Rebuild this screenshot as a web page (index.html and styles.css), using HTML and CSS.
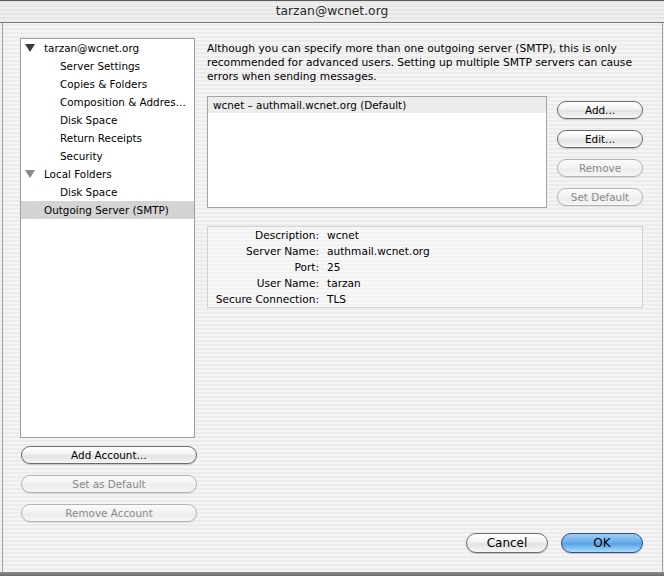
FILE: index.html
```html
<!DOCTYPE html>
<html>
<head>
  <meta charset="utf-8">
  <title>Account Settings</title>
  <link rel="stylesheet" href="styles.css">
</head>
<body>
  <div class="window">
    <div class="titlebar">tarzan@wcnet.org</div>

    <div class="frame">
      <div class="main">

        <div class="sidebar">
          <ul class="tree">
            <li class="row top">
              <svg class="twisty" width="10" height="8" viewBox="0 0 10 8"><polygon points="0,0 10,0 5,8" fill="#3a3a3a"/></svg>
              tarzan@wcnet.org
            </li>
            <li class="row sub">Server Settings</li>
            <li class="row sub">Copies &amp; Folders</li>
            <li class="row sub">Composition &amp; Addres&hellip;</li>
            <li class="row sub">Disk Space</li>
            <li class="row sub">Return Receipts</li>
            <li class="row sub">Security</li>
            <li class="row top">
              <svg class="twisty" width="10" height="8" viewBox="0 0 10 8"><polygon points="0,0 10,0 5,8" fill="#8a8a8a"/></svg>
              Local Folders
            </li>
            <li class="row sub">Disk Space</li>
            <li class="row top plain selected">Outgoing Server (SMTP)</li>
          </ul>

          <div class="side-buttons">
            <button class="btn">Add Account&hellip;</button>
            <button class="btn" disabled>Set as Default</button>
            <button class="btn" disabled>Remove Account</button>
          </div>
        </div>

        <div class="panel">
          <p class="note">Although you can specify more than one outgoing server (SMTP), this is only
            recommended for advanced users. Setting up multiple SMTP servers can cause
            errors when sending messages.</p>

          <div class="servers">
            <div class="server-list">
              <div class="server-row selected">wcnet &ndash; authmail.wcnet.org (Default)</div>
            </div>
            <div class="server-buttons">
              <button class="btn">Add...</button>
              <button class="btn">Edit...</button>
              <button class="btn" disabled>Remove</button>
              <button class="btn" disabled>Set Default</button>
            </div>
          </div>

          <table class="details">
            <tbody>
              <tr><td class="label">Description:</td><td class="value">wcnet</td></tr>
              <tr><td class="label">Server Name:</td><td class="value">authmail.wcnet.org</td></tr>
              <tr><td class="label">Port:</td><td class="value">25</td></tr>
              <tr><td class="label">User Name:</td><td class="value">tarzan</td></tr>
              <tr><td class="label">Secure Connection:</td><td class="value">TLS</td></tr>
            </tbody>
          </table>
        </div>

      </div>

      <div class="dialog-buttons">
        <button class="btn big">Cancel</button>
        <button class="btn big default">OK</button>
      </div>
    </div>

    <div class="shadow"></div>
  </div>
</body>
</html>
```

FILE: styles.css
```css
html,
body {
  margin: 0;
  padding: 0;
}

body {
  width: 664px;
  height: 576px;
  overflow: hidden;
  font-family: "DejaVu Sans", sans-serif;
  font-size: 10.4px;
  color: #000;
}

.window {
  display: flex;
  flex-direction: column;
  height: 576px;
  background: repeating-linear-gradient(#ececec 0px, #ececec 2px, #f4f4f4 2px, #f4f4f4 4px);
}

.titlebar {
  height: 23px;
  box-sizing: border-box;
  line-height: 21px;
  text-align: center;
  font-size: 12.3px;
  color: #2a2a2a;
  border-top: 1px solid #5a5a5a;
  border-bottom: 1px solid #7a7a7a;
  background: repeating-linear-gradient(#e6e6e6 0px, #e6e6e6 2px, #efefef 2px, #efefef 4px);
}

.frame {
  flex: 1;
  display: flex;
  flex-direction: column;
  margin: 0 1px 0 2px;
  border-left: 1px solid #a0a0a0;
  border-right: 1px solid #a0a0a0;
}

.main {
  flex: 1;
  display: flex;
  gap: 9px;
  padding: 15px 0 0 17px;
}

/* left column */

.sidebar {
  width: 178px;
}

.tree {
  list-style: none;
  margin: 0;
  padding: 0;
  width: 175px;
  height: 400px;
  box-sizing: border-box;
  border: 1px solid #9c9c9c;
  background: #fff;
}

.row {
  height: 18px;
  line-height: 18px;
  white-space: nowrap;
  position: relative;
}

.row.top {
  padding-left: 23px;
}

.row.sub {
  padding-left: 39px;
}

.row.selected {
  background: #d4d4d4;
}

.twisty {
  position: absolute;
  left: 4px;
  top: 5px;
}

.side-buttons {
  display: flex;
  flex-direction: column;
  gap: 11px;
  margin-top: 8px;
  padding-left: 1px;
}

.side-buttons .btn {
  width: 176px;
}

/* aqua buttons */

.btn {
  height: 18px;
  padding: 0;
  font-family: inherit;
  font-size: 10.4px;
  color: #000;
  border: 1px solid #6c6c6c;
  border-radius: 9px;
  background: linear-gradient(#ffffff 0%, #f2f2f2 45%, #e2e2e2 55%, #f6f6f6 100%);
  box-shadow: 0 1px 1px rgba(0, 0, 0, 0.18);
}

.btn:disabled {
  color: #8a8a8a;
  border-color: #b4b4b4;
  background: linear-gradient(#fbfbfb 0%, #f2f2f2 50%, #ececec 55%, #f6f6f6 100%);
  box-shadow: 0 1px 1px rgba(0, 0, 0, 0.08);
}

.btn.big {
  height: 20px;
  font-size: 12px;
  border-radius: 10px;
}

.btn.default {
  border-color: #2f4d8c;
  background: linear-gradient(#9fcdf4 0%, #6aaeea 45%, #5aa2e6 55%, #a7ddfb 100%);
}

/* right column */

.panel {
  width: 436px;
}

.note {
  margin: 4px 0 0;
  font-size: 10.7px;
  line-height: 14px;
}

.servers {
  display: flex;
  gap: 10px;
  margin-top: 12px;
}

.server-list {
  width: 340px;
  height: 112px;
  box-sizing: border-box;
  border: 1px solid #a4a4a4;
  background: #fff;
}

.server-row {
  height: 16px;
  line-height: 16px;
  padding-left: 5px;
}

.server-row.selected {
  background: #ececec;
}

.server-buttons {
  display: flex;
  flex-direction: column;
  gap: 11px;
  padding-top: 5px;
}

.server-buttons .btn {
  width: 86px;
}

.details {
  width: 436px;
  margin-top: 18px;
  border-collapse: collapse;
  border: 1px solid #d2d2d2;
  background: rgba(255, 255, 255, 0.35);
  font-size: 10.6px;
}

.details td {
  height: 16px;
  line-height: 16px;
  padding: 0;
  white-space: nowrap;
}

.details .label {
  width: 111px;
  text-align: right;
}

.details .value {
  padding-left: 8px;
}

/* bottom */

.dialog-buttons {
  display: flex;
  justify-content: flex-end;
  gap: 13px;
  padding: 0 19px 19px 0;
}

.dialog-buttons .btn {
  width: 82px;
}

.shadow {
  height: 4px;
  background: linear-gradient(#8c8c8c, #6a6a6a);
}
```
